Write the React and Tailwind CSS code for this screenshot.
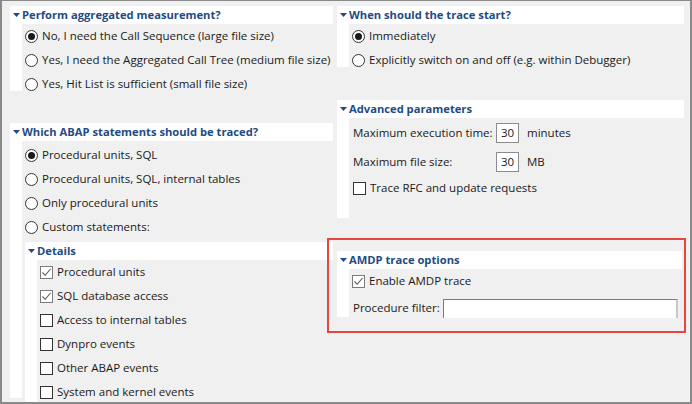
import React from "react";

const Triangle = () => (
  <svg width="7" height="4" viewBox="0 0 7 4" className="block">
    <polygon points="0,0 7,0 3.5,4" fill="#1f4b82" />
  </svg>
);

const Section = ({ title, className = "", children }) => (
  <div className={`bg-white flex flex-col ${className}`}>
    <div className="h-[18px] shrink-0 flex items-center">
      <span className="w-[12px] pl-[3px] flex items-center">
        <Triangle />
      </span>
      <span className="font-bold text-[11.2px] text-[#1f4b82] leading-none whitespace-nowrap">{title}</span>
    </div>
    <div className="flex-1 ml-[12px] bg-[#f0f0f0] pl-[3px]">{children}</div>
  </div>
);

const Radio = ({ label, checked }) => (
  <div className="h-[24px] flex items-center gap-[4px]">
    <div className="w-[13px] h-[13px] rounded-full border border-[#333] bg-white flex items-center justify-center shrink-0">
      {checked && <div className="w-[7px] h-[7px] rounded-full bg-[#1a1a1a]" />}
    </div>
    <span className="whitespace-nowrap">{label}</span>
  </div>
);

const Checkbox = ({ label, checked }) => (
  <div className="h-[24px] flex items-center gap-[4px]">
    <div
      className={`w-[13px] h-[13px] border bg-white flex items-center justify-center shrink-0 ${
        checked ? "border-[#7a7a7a]" : "border-[#333]"
      }`}
    >
      {checked && (
        <svg width="11" height="11" viewBox="0 0 11 11">
          <path d="M1.5 5.5 L4.2 8.3 L9.5 2" fill="none" stroke="#555" strokeWidth="1.1" />
        </svg>
      )}
    </div>
    <span className="whitespace-nowrap">{label}</span>
  </div>
);

const NumBox = ({ value }) => (
  <div className="w-[23px] h-[20px] shrink-0 border border-[#8c8c8c] bg-white flex items-center justify-center">
    {value}
  </div>
);

export default function App() {
  return (
    <div className="relative w-[692px] h-[404px] overflow-hidden bg-[#f0f0f0] border-t border-l-2 border-r-2 border-b-2 border-[#8a8a8a] font-['Open_Sans',sans-serif] text-[11.5px] text-[#1a1a1a]">
      <div className="flex gap-[4px] pt-[5px] pl-[8px]">
        {/* left column */}
        <div className="w-[323px] flex flex-col">
          <Section title="Perform aggregated measurement?" className="h-[85px]">
            <Radio checked label="No, I need the Call Sequence (large file size)" />
            <Radio label="Yes, I need the Aggregated Call Tree (medium file size)" />
            <Radio label="Yes, Hit List is sufficient (small file size)" />
          </Section>

          <Section title="Which ABAP statements should be traced?" className="mt-[32px] h-[275px]">
            <div className="pt-[2px]">
              <Radio checked label="Procedural units, SQL" />
              <Radio label="Procedural units, SQL, internal tables" />
              <Radio label="Only procedural units" />
              <Radio label="Custom statements:" />
            </div>
            <div className="mt-[3px] h-[160px]">
              <Section title="Details" className="h-full">
                <Checkbox checked label="Procedural units" />
                <Checkbox checked label="SQL database access" />
                <Checkbox label="Access to internal tables" />
                <Checkbox label="Dynpro events" />
                <Checkbox label="Other ABAP events" />
                <Checkbox label="System and kernel events" />
              </Section>
            </div>
          </Section>
        </div>

        {/* right column */}
        <div className="w-[347px] flex flex-col">
          <Section title="When should the trace start?" className="h-[61px]">
            <Radio checked label="Immediately" />
            <Radio label="Explicitly switch on and off (e.g. within Debugger)" />
          </Section>

          <Section title="Advanced parameters" className="mt-[33px] h-[118px]">
            <div className="pl-[1px]">
              <div className="h-[29px] flex items-center">
                <span className="w-[143px] whitespace-nowrap">Maximum execution time:</span>
                <NumBox value="30" />
                <span className="ml-[8px]">minutes</span>
              </div>
              <div className="h-[29px] flex items-center">
                <span className="w-[143px] whitespace-nowrap">Maximum file size:</span>
                <NumBox value="30" />
                <span className="ml-[8px]">MB</span>
              </div>
              <Checkbox label="Trace RFC and update requests" />
            </div>
          </Section>

          <Section title="AMDP trace options" className="mt-[33px] w-[345px] h-[66px]">
            <Checkbox checked label="Enable AMDP trace" />
            <div className="flex items-end pt-[5px] pr-[4px] pl-[1px]">
              <span className="w-[90px] shrink-0 leading-[20px] whitespace-nowrap">Procedure filter:</span>
              <div className="flex-1 h-[19px] bg-white border-t border-l border-r-2 border-t-[#7a7a7a] border-l-[#7a7a7a] border-r-[#c8c8c8]" />
            </div>
          </Section>
        </div>
      </div>

      {/* highlight annotation */}
      <div className="absolute left-[325px] top-[237px] w-[359px] h-[95px] border-2 border-[#e5463f] pointer-events-none" />
    </div>
  );
}
